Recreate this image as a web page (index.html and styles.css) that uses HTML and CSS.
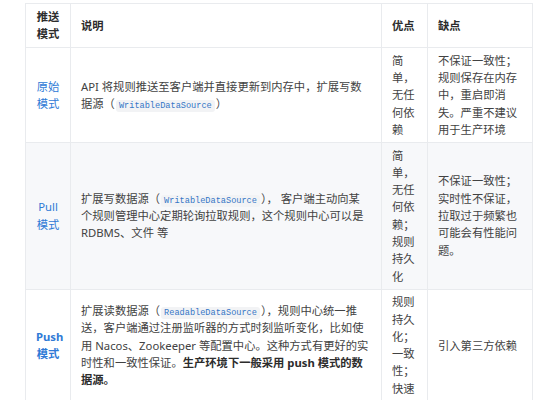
FILE: index.html
```html
<!DOCTYPE html>
<html lang="zh">
<head>
<meta charset="utf-8">
<link rel="stylesheet" href="styles.css">
</head>
<body>
<table class="tbl">
  <colgroup>
    <col class="c1"><col class="c2"><col class="c3"><col class="c4">
  </colgroup>
  <thead>
    <tr>
      <th class="mode">推送模式</th>
      <th>说明</th>
      <th>优点</th>
      <th>缺点</th>
    </tr>
  </thead>
  <tbody>
    <tr>
      <td class="mode"><span class="link">原始模式</span></td>
      <td>API 将规则推送至客户端并直接更新到内存中，扩展写数据源（<code>WritableDataSource</code>）</td>
      <td>简单，无任何依赖</td>
      <td>不保证一致性；规则保存在内存中，重启即消失。严重不建议用于生产环境</td>
    </tr>
    <tr class="alt">
      <td class="mode"><span class="link">Pull 模式</span></td>
      <td>扩展写数据源（<code>WritableDataSource</code>）， 客户端主动向某个规则管理中心定期轮询拉取规则，这个规则中心可以是 RDBMS、文件 等</td>
      <td>简单，无任何依赖；规则持久化</td>
      <td>不保证一致性；实时性不保证，拉取过于频繁也可能会有性能问题。</td>
    </tr>
    <tr>
      <td class="mode"><strong class="link">Push 模式</strong></td>
      <td>扩展读数据源（<code>ReadableDataSource</code>），规则中心统一推送，客户端通过注册监听器的方式时刻监听变化，比如使用 Nacos、Zookeeper 等配置中心。这种方式有更好的实时性和一致性保证。<strong>生产环境下一般采用 push 模式的数据源。</strong></td>
      <td>规则持久化；一致性；快速</td>
      <td>引入第三方依赖</td>
    </tr>
  </tbody>
</table>
</body>
</html>
```

FILE: styles.css
```css
html, body {
  margin: 0;
  padding: 0;
  background: #ffffff;
}

body {
  font-family: "Noto Sans", "Noto Sans CJK SC", sans-serif;
  color: #424242;
}

.tbl {
  border-collapse: collapse;
  table-layout: fixed;
  width: 507px;
  margin: 3px 0 0 25px;
  font-size: 11.3px;
  line-height: 17.3px;
}

.c1 { width: 45px; }
.c2 { width: 311px; }
.c3 { width: 46px; }
.c4 { width: 105px; }

.tbl th,
.tbl td {
  border: 1px solid #e9ebee;
  padding: 3.7px 10px;
  vertical-align: middle;
  text-align: left;
  word-break: normal;
  line-break: strict;
}

.tbl th {
  font-weight: 700;
  color: #2c2c2c;
  padding-top: 4.2px;
  padding-bottom: 4.2px;
}

.tbl .mode {
  text-align: center;
}

.alt td {
  background: #f7f8fa;
}

.link {
  color: #2f7ad6;
}

strong {
  font-weight: 700;
  color: #2c2c2c;
}

strong.link {
  color: #2f7ad6;
}

code {
  font-family: "Liberation Mono", "DejaVu Sans Mono", monospace;
  font-size: 8.6px;
  line-height: 10px;
  color: #3576c6;
  background: #f2f3f5;
  padding: 1px 3px;
  border-radius: 3px;
  margin: 0 1px;
}
```
